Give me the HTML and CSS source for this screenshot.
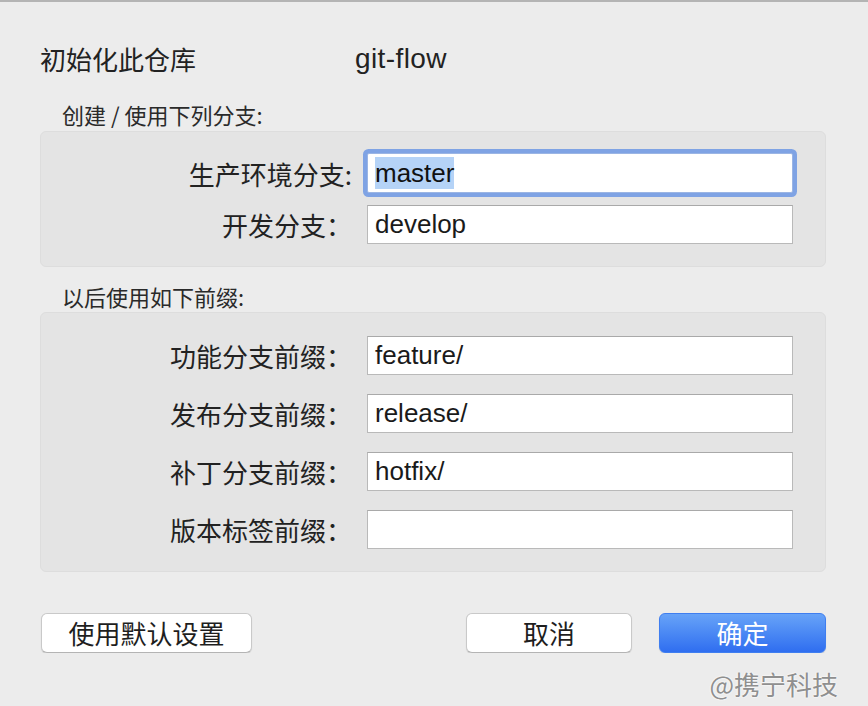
FILE: index.html
```html
<!DOCTYPE html>
<html lang="zh-CN">
<head>
    <meta charset="UTF-8">
    <meta name="viewport" content="width=device-width, initial-scale=1.0">
    <title>初始化此仓库</title>
    <link rel="stylesheet" href="styles.css">
</head>
<body>

<main class="dialog">
    <div class="title-row">
        <span class="title">初始化此仓库</span>
        <span class="repo">git-flow</span>
    </div>

    <div class="group-label">创建 / 使用下列分支:</div>
    <div class="group">
        <label class="row-label">生产环境分支:</label>
        <div class="field focused"><span class="sel">master</span></div>
        <label class="row-label">开发分支：</label>
        <div class="field">develop</div>
    </div>

    <div class="group-label second">以后使用如下前缀:</div>
    <div class="group prefixes">
        <label class="row-label">功能分支前缀：</label>
        <div class="field">feature/</div>
        <label class="row-label">发布分支前缀：</label>
        <div class="field">release/</div>
        <label class="row-label">补丁分支前缀：</label>
        <div class="field">hotfix/</div>
        <label class="row-label">版本标签前缀：</label>
        <div class="field"></div>
    </div>

    <div class="actions">
        <button class="btn btn-default">使用默认设置</button>
        <div class="actions-right">
            <button class="btn btn-cancel">取消</button>
            <button class="btn btn-ok">确定</button>
        </div>
    </div>
</main>

<div class="watermark">@携宁科技</div>

</body>
</html>
```

FILE: styles.css
```css
body {
    margin: 0;
    background-color: #ececec;
    border-top: 2px solid #b4b4b4;
    font-family: "Noto Sans CJK SC", "Liberation Sans", sans-serif;
    color: #222222;
}

.dialog {
    padding: 39px 42px 0 40px;
}

.title-row {
    display: flex;
    align-items: center;
    height: 36px;
    line-height: 36px;
}
.title {
    width: 315px;
    font-size: 26px;
}
.repo {
    font-family: "Liberation Sans", sans-serif;
    font-size: 28px;
    letter-spacing: 0.4px;
}

.group-label {
    margin-top: 24px;
    padding-left: 22px;
    height: 30px;
    line-height: 27px;
    font-size: 22px;
    color: #2a2a2a;
}
.group-label.second {
    margin-top: 16px;
    height: 29px;
}

.group {
    display: grid;
    grid-template-columns: 311px 426px;
    column-gap: 15px;
    row-gap: 12px;
    align-items: center;
    padding: 21px 0 22px;
    background-color: #e4e4e4;
    border: 1px solid #dddddd;
    border-radius: 6px;
}
.group.prefixes {
    row-gap: 19px;
    padding: 23px 0 22px;
}

.row-label {
    text-align: right;
    font-size: 26px;
    line-height: 39px;
    white-space: nowrap;
}

.field {
    height: 39px;
    line-height: 37px;
    padding: 0 7px;
    background-color: #ffffff;
    border: 1px solid #b9b9b9;
    border-top-color: #a9a9a9;
    box-sizing: border-box;
    font-family: "Liberation Sans", sans-serif;
    font-size: 26px;
    color: #1a1a1a;
}
.field.focused {
    height: 40px;
    line-height: 38px;
    border-color: #9bb5e4;
    border-radius: 2px;
    box-shadow: 0 0 0 4px #7fa3e4;
}
.sel {
    display: inline-block;
    line-height: 32px;
    background-color: #b5d3f7;
    color: #111111;
}

.actions {
    display: flex;
    justify-content: space-between;
    align-items: center;
    margin-top: 41px;
    padding-left: 1px;
}
.actions-right {
    display: flex;
    gap: 27px;
}

.btn {
    height: 40px;
    padding: 0;
    font-family: "Noto Sans CJK SC", sans-serif;
    font-size: 26px;
    line-height: 38px;
    color: #1e1e1e;
    background-color: #ffffff;
    border: 1px solid #c9c9c9;
    border-bottom-color: #b4b4b4;
    border-radius: 6px;
    box-shadow: 0 1px 1px rgba(0, 0, 0, 0.12);
    cursor: pointer;
}
.btn-default { width: 211px; }
.btn-cancel { width: 166px; }
.btn-ok {
    width: 167px;
    color: #ffffff;
    border: 1px solid #3f7ef0;
    background: linear-gradient(#67a3f8, #2f6ef0);
}

/* watermark sits over the window corner */
.watermark {
    position: absolute;
    top: 668px;
    right: 30px;
    font-size: 26px;
    line-height: 32px;
    color: #8f8f8f;
    text-shadow: 0 0 2px #ffffff, 0 0 2px #ffffff;
}
```
